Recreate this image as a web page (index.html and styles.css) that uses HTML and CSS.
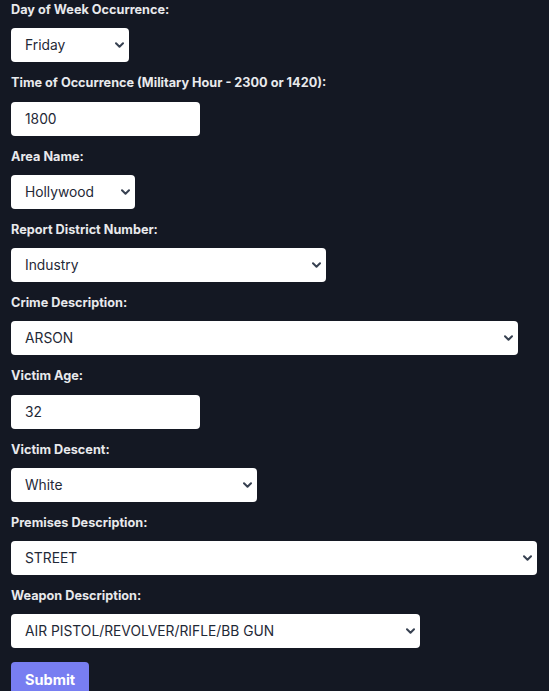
FILE: index.html
```html
<!DOCTYPE html>
<html lang="en">
<head>
<meta charset="utf-8">
<title>Crime Prediction Form</title>
<link rel="stylesheet" href="styles.css">
</head>
<body>
<form class="form">
  <div class="field">
    <label class="label" for="day">Day of Week Occurrence:</label>
    <select id="day" class="control select w-day"><option>Friday</option></select>
  </div>
  <div class="field">
    <label class="label" for="time">Time of Occurrence (Military Hour - 2300 or 1420):</label>
    <input id="time" class="control input" type="text" value="1800">
  </div>
  <div class="field">
    <label class="label" for="area">Area Name:</label>
    <select id="area" class="control select w-area"><option>Hollywood</option></select>
  </div>
  <div class="field">
    <label class="label" for="district">Report District Number:</label>
    <select id="district" class="control select w-district"><option>Industry</option></select>
  </div>
  <div class="field">
    <label class="label" for="crime">Crime Description:</label>
    <select id="crime" class="control select w-crime"><option>ARSON</option></select>
  </div>
  <div class="field">
    <label class="label" for="age">Victim Age:</label>
    <input id="age" class="control input" type="text" value="32">
  </div>
  <div class="field">
    <label class="label" for="descent">Victim Descent:</label>
    <select id="descent" class="control select w-descent"><option>White</option></select>
  </div>
  <div class="field">
    <label class="label" for="premises">Premises Description:</label>
    <select id="premises" class="control select w-premises"><option>STREET</option></select>
  </div>
  <div class="field">
    <label class="label" for="weapon">Weapon Description:</label>
    <select id="weapon" class="control select w-weapon"><option>AIR PISTOL/REVOLVER/RIFLE/BB GUN</option></select>
  </div>
  <button type="button" class="submit">Submit</button>
</form>
</body>
</html>
```

FILE: styles.css
```css
* {
  box-sizing: border-box;
}

html, body {
  margin: 0;
  padding: 0;
  background: #141823;
}

body {
  font-family: Inter, "Noto Sans", "Liberation Sans", sans-serif;
  color: #e5e7eb;
}

.form {
  padding: 2px 11px 20px;
}

.field {
  margin-bottom: 13px;
}

.label {
  display: block;
  font-size: 12.7px;
  line-height: 16.25px;
  font-weight: 700;
  color: #e8e9ec;
  margin-bottom: 10px;
}

.control {
  display: block;
  height: 34px;
  margin: 0;
  border: none;
  border-radius: 4px;
  background-color: #ffffff;
  color: #1f2937;
  font-family: Inter, "Noto Sans", "Liberation Sans", sans-serif;
  font-size: 13.8px;
  line-height: 20px;
  padding: 0 30px 0 14px;
  outline: none;
}

.input {
  width: 189px;
  padding-right: 14px;
}

.select {
  -webkit-appearance: none;
  appearance: none;
  background-image: url("data:image/svg+xml,%3Csvg xmlns='http://www.w3.org/2000/svg' width='9' height='6' viewBox='0 0 9 6'%3E%3Cpath d='M1 1.2l3.5 3.5 3.5-3.5' fill='none' stroke='%23374151' stroke-width='2' stroke-linecap='round' stroke-linejoin='round'/%3E%3C/svg%3E");
  background-repeat: no-repeat;
  background-position: right 5px center;
  background-size: 9px 6px;
}

.w-day { width: 118px; }
.w-area { width: 124px; }
.w-district { width: 315px; }
.w-crime { width: 507px; }
.w-descent { width: 246px; }
.w-premises { width: 526px; }
.w-weapon { width: 409px; }

.submit {
  display: block;
  margin-top: 14px;
  padding: 8px 14px;
  border: none;
  border-radius: 4px;
  background: #787ef1;
  color: #ffffff;
  font-family: Inter, "Noto Sans", "Liberation Sans", sans-serif;
  font-size: 14.5px;
  line-height: 20px;
  font-weight: 700;
  width: 78px;
}
```
